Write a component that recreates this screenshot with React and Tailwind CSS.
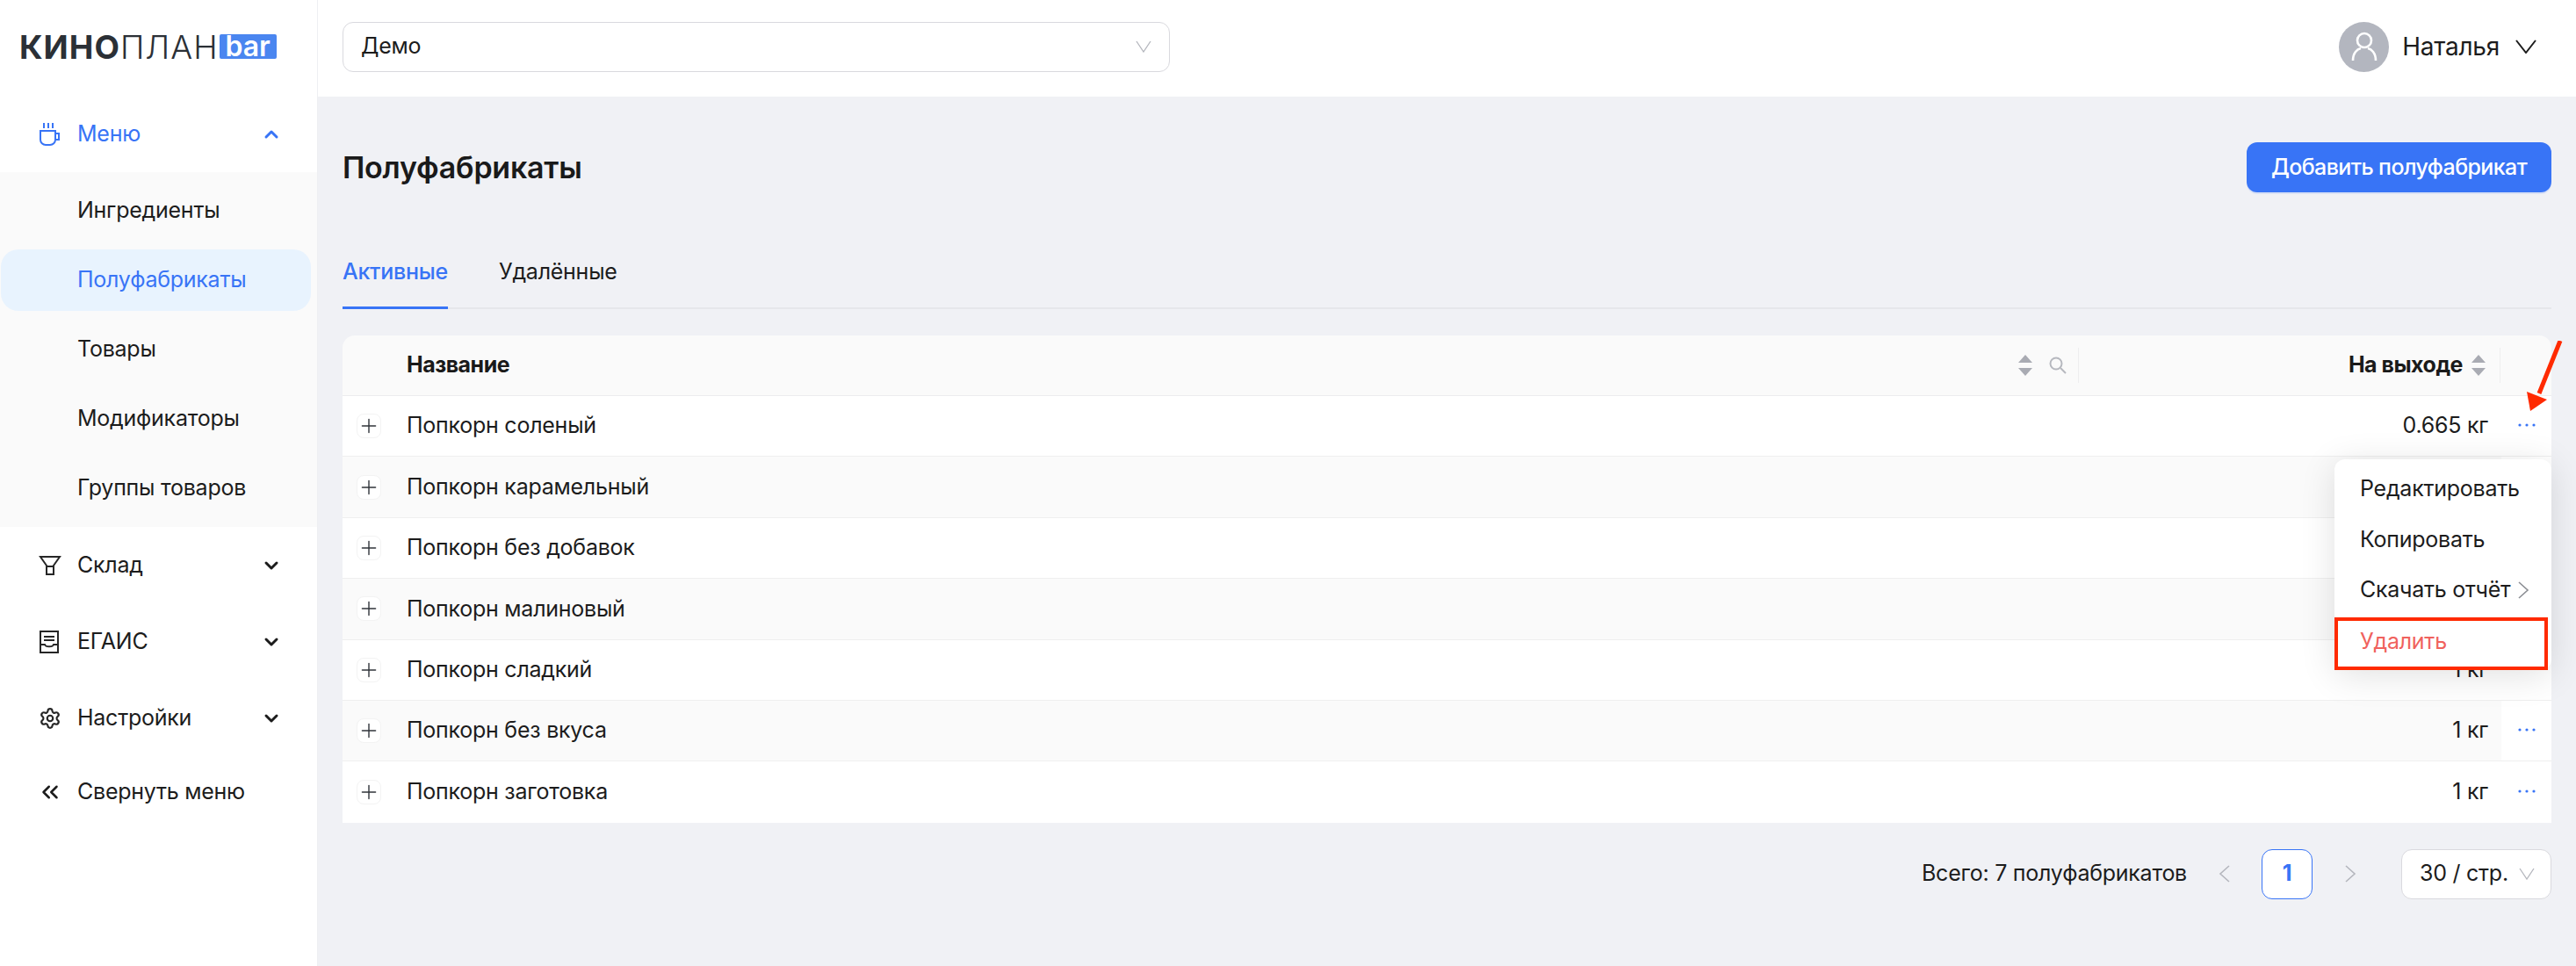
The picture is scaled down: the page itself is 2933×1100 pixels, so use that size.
import { Settings, ChevronUp, ChevronDown, ChevronsLeft, Plus } from 'lucide-react'

const subItems = ['Ингредиенты', 'Полуфабрикаты', 'Товары', 'Модификаторы', 'Группы товаров']

const rows = [
  { name: 'Попкорн соленый', amount: '0.665 кг' },
  { name: 'Попкорн карамельный', amount: '1 кг' },
  { name: 'Попкорн без добавок', amount: '1 кг' },
  { name: 'Попкорн малиновый', amount: '1 кг' },
  { name: 'Попкорн сладкий', amount: '1 кг' },
  { name: 'Попкорн без вкуса', amount: '1 кг' },
  { name: 'Попкорн заготовка', amount: '1 кг' },
]

const CupIcon = () => (
  <svg width="24" height="28" viewBox="0 0 24 28" fill="none" stroke="#3874f6" strokeWidth="2">
    <path d="M6 1v6M11 1v6M16 1v6" />
    <path d="M2 10h17v10a6 6 0 0 1-6 6H8a6 6 0 0 1-6-6z" />
    <path d="M19 13h4v7h-4" />
  </svg>
)

const FunnelIcon = () => (
  <svg width="26" height="24" viewBox="0 0 26 24" fill="none" stroke="#262626" strokeWidth="2">
    <path d="M2 2h22l-7 10v10H9V12z" />
    <path d="M9 13h8" />
  </svg>
)

const ReceiptIcon = () => (
  <svg width="24" height="26" viewBox="0 0 24 26" fill="none" stroke="#262626" strokeWidth="2">
    <path d="M2 1h20v24H2z" />
    <path d="M6 7h12M6 11h12M2 16h5c1 3 9 3 10 0h5" />
  </svg>
)

const SortIcon = () => (
  <svg width="16" height="24" viewBox="0 0 16 24" fill="#a9abb3">
    <path d="M8 0l8 9H0zM8 24l8-9H0z" />
  </svg>
)

const SearchIcon = () => (
  <svg width="20" height="20" viewBox="0 0 20 20" fill="none" stroke="#b6b8bf" strokeWidth="2">
    <circle cx="8" cy="8" r="6.5" />
    <path d="M13 13l6 6" />
  </svg>
)

const Dots = () => (
  <svg width="20" height="4" viewBox="0 0 20 4" fill="#3874f6">
    <circle cx="2" cy="2" r="1.6" />
    <circle cx="10" cy="2" r="1.6" />
    <circle cx="18" cy="2" r="1.6" />
  </svg>
)

// thin wide "v" used by the selects and the user menu
const Vee = ({ width = 18, height = 14, color = '#b4b6bd', stroke = 1.3 }) => (
  <svg width={width} height={height} viewBox={`0 0 ${width} ${height}`} fill="none" stroke={color} strokeWidth={stroke}>
    <path d={`M1 1L${width / 2} ${height - 1}L${width - 1} 1`} />
  </svg>
)

const Arrow = ({ left = false, color = '#b4b6bd' }) => (
  <svg width="13" height="20" viewBox="0 0 13 20" fill="none" stroke={color} strokeWidth="1.6">
    <path d={left ? 'M12 1L2 10L12 19' : 'M1 1L11 10L1 19'} />
  </svg>
)

const NavItem = ({ icon, label, active = false, open = false, height = 'h-[87px]' }) => (
  <div className={`flex ${height} items-center pl-[44px] pr-[40px] ${active ? 'text-[#3874f6]' : 'text-[#1c1c1c]'}`}>
    <span className="flex w-[44px] shrink-0 items-center">{icon}</span>
    <span className="flex-1">{label}</span>
    {open ? <ChevronUp size={24} strokeWidth={3} /> : <ChevronDown size={24} strokeWidth={3} />}
  </div>
)

const Sidebar = () => (
  <aside className="flex w-[362px] shrink-0 flex-col border-r border-[#eeeff2] bg-white">
    <div className="flex h-[110px] items-center pb-[4px] pl-[22px] text-[37px] leading-none tracking-[1px] text-[#2b3036]">
      <span className="font-bold">КИНО</span>
      <span className="font-light">ПЛАН</span>
      <span className="ml-[1px] flex h-[28px] w-[65px] items-center justify-center rounded-[2px] bg-[#4a86f0] text-[32px] font-semibold tracking-normal text-white">
        bar
      </span>
    </div>
    <NavItem icon={<CupIcon />} label="Меню" active open height="h-[86px]" />
    <div className="bg-[#fafafa] pt-[9px] pb-[9px]">
      <div className="flex flex-col gap-[9px]">
        {subItems.map((item) => (
          <div
            key={item}
            className={
              item === 'Полуфабрикаты'
                ? 'ml-px flex h-[70px] w-[353px] items-center rounded-[20px] bg-[#e8f3fe] pl-[87px] text-[#3874f6]'
                : 'flex h-[70px] items-center pl-[88px] text-[#1c1c1c]'
            }
          >
            {item}
          </div>
        ))}
      </div>
    </div>
    <NavItem icon={<FunnelIcon />} label="Склад" />
    <NavItem icon={<ReceiptIcon />} label="ЕГАИС" />
    <NavItem icon={<Settings size={26} strokeWidth={2} color="#262626" />} label="Настройки" />
    <div className="flex h-[82px] items-center pl-[42px] text-[#1c1c1c]">
      <span className="flex w-[46px] shrink-0 items-center">
        <ChevronsLeft size={30} strokeWidth={2} />
      </span>
      <span>Свернуть меню</span>
    </div>
  </aside>
)

const Header = () => (
  <header className="flex h-[110px] items-center justify-between bg-white pr-[45px] pb-[4px] pl-[28px]">
    <div className="flex h-[57px] w-[942px] items-center justify-between rounded-[12px] border border-[#d9d9de] pr-[20px] pl-[20px] text-[#1c1c1c]">
      <span>Демо</span>
      <Vee />
    </div>
    <div className="flex items-center">
      <div className="flex h-[57px] w-[57px] items-center justify-center rounded-full bg-[#b3b6bf]">
        <svg width="32" height="36" viewBox="0 0 32 36" fill="none" stroke="white" strokeWidth="2.6">
          <circle cx="16" cy="11" r="8" />
          <path d="M3 34c0-9 5-13 9-14M29 34c0-9-5-13-9-14" />
        </svg>
      </div>
      <span className="ml-[15px] text-[28px] text-[#1c1c1c]">Наталья</span>
      <span className="ml-[18px]"><Vee width={24} height={16} color="#1c1c1c" stroke={2} /></span>
    </div>
  </header>
)

const Table = () => (
  <div className="relative">
    <div className="overflow-hidden rounded-t-[14px]">
      <div className="flex h-[69px] items-center border-b border-[#ececee] bg-[#fafafa] pl-[73px] font-bold tracking-[-0.5px] text-[#1a1a1a]">
        <span className="flex-1">Название</span>
        <span className="mr-[19px]"><SortIcon /></span>
        <span className="mr-[13px]"><SearchIcon /></span>
        <span className="h-[40px] w-px bg-[#eeeeef]" />
        <span className="ml-auto flex w-[480px] items-center justify-end">
          <span>На выходе</span>
          <span className="ml-[10px]"><SortIcon /></span>
          <span className="ml-[16px] h-[40px] w-px bg-[#eeeeef]" />
        </span>
        <span className="w-[58px]" />
      </div>
      {rows.map((row, i) => (
        <div
          key={row.name}
          className={`flex h-[69.4px] items-center border-b border-[#efefef] text-[#1c1c1c] last:border-b-0 ${i % 2 === 1 ? 'bg-[#fafafa]' : 'bg-white'}`}
        >
          <span className="ml-[16px] flex h-[28px] w-[28px] items-center justify-center rounded-[8px] border border-[#f3f3f3] bg-white">
            <Plus size={26} strokeWidth={1.3} color="#30343a" />
          </span>
          <span className="ml-[29px] flex-1">{row.name}</span>
          <span className="mr-[15px]">{row.amount}</span>
          <span className="flex h-full w-[57px] items-center justify-center bg-white pb-[3px]">
            <Dots />
          </span>
        </div>
      ))}
    </div>

    {/* row menu opened over the table */}
    <div className="absolute top-[141px] right-0 w-[247px] rounded-[12px] bg-white pt-[5px] whitespace-nowrap text-[#1c1c1c] shadow-[0_6px_40px_rgba(0,0,0,0.12)]">
      <div className="flex h-[57.5px] items-center pl-[29px]">Редактировать</div>
      <div className="flex h-[57.5px] items-center pl-[29px]">Копировать</div>
      <div className="mb-[2px] flex h-[57.5px] items-center justify-between pr-[25px] pl-[29px]">
        <span>Скачать отчёт</span>
        <Arrow color="#8b8d93" />
      </div>
      <div className="mr-[4px] flex h-[60px] items-center border-[4px] border-[#ff2a00] pb-[4px] pl-[25px] text-[#f0625d]">Удалить</div>
    </div>

    {/* annotation arrow */}
    <svg className="absolute top-[6px] right-[-14px]" width="50" height="90" viewBox="0 0 50 90" fill="none">
      <path d="M46 0L22 60" stroke="#ff2a00" strokeWidth="5" />
      <path d="M12 80L8 58L31 67z" fill="#ff2a00" />
    </svg>
  </div>
)

export default function App() {
  return (
    <div className="flex h-[1100px] w-[2933px] overflow-hidden bg-[#f0f1f5] font-['Inter',sans-serif] text-[25px] tracking-[-0.25px]">
      <Sidebar />
      <div className="flex min-w-0 flex-1 flex-col">
        <Header />
        <main className="flex flex-col pr-[28px] pl-[28px]">
          <div className="flex items-center justify-between pt-[52px]">
            <h1 className="text-[34px] font-semibold text-[#1a1a1a]">Полуфабрикаты</h1>
            <button
              type="button"
              className="flex h-[57px] w-[347px] items-center justify-center rounded-[12px] bg-[#3874f6] font-medium tracking-[-0.6px] text-white shadow-[0_2px_0_rgba(56,116,246,0.12)]"
            >
              Добавить полуфабрикат
            </button>
          </div>
          <div className="mt-[50px] flex h-[83px] items-end gap-[58px] border-b-2 border-[#e6e7eb]">
            <div className="-mb-[2px] flex h-full items-center border-b-[3px] border-[#3874f6] font-medium text-[#3874f6]">Активные</div>
            <div className="flex h-full items-center text-[#1c1c1c]">Удалённые</div>
          </div>
          <div className="mt-[30px]">
            <Table />
          </div>
          <div className="mt-[30px] flex items-center justify-end whitespace-nowrap">
            <span className="text-[#1c1c1c]">Всего: 7 полуфабрикатов</span>
            <span className="ml-[36px]"><Arrow left /></span>
            <span className="ml-[36px] flex h-[57px] w-[58px] items-center justify-center rounded-[12px] border border-[#3874f6] bg-white font-bold text-[#3874f6]">1</span>
            <span className="ml-[37px]"><Arrow /></span>
            <div className="ml-[51px] flex h-[57px] w-[171px] items-center justify-between rounded-[12px] border border-[#d9d9de] bg-white pr-[18px] pl-[20px] text-[#1c1c1c]">
              <span>30 / стр.</span>
              <Vee />
            </div>
          </div>
        </main>
      </div>
    </div>
  )
}
